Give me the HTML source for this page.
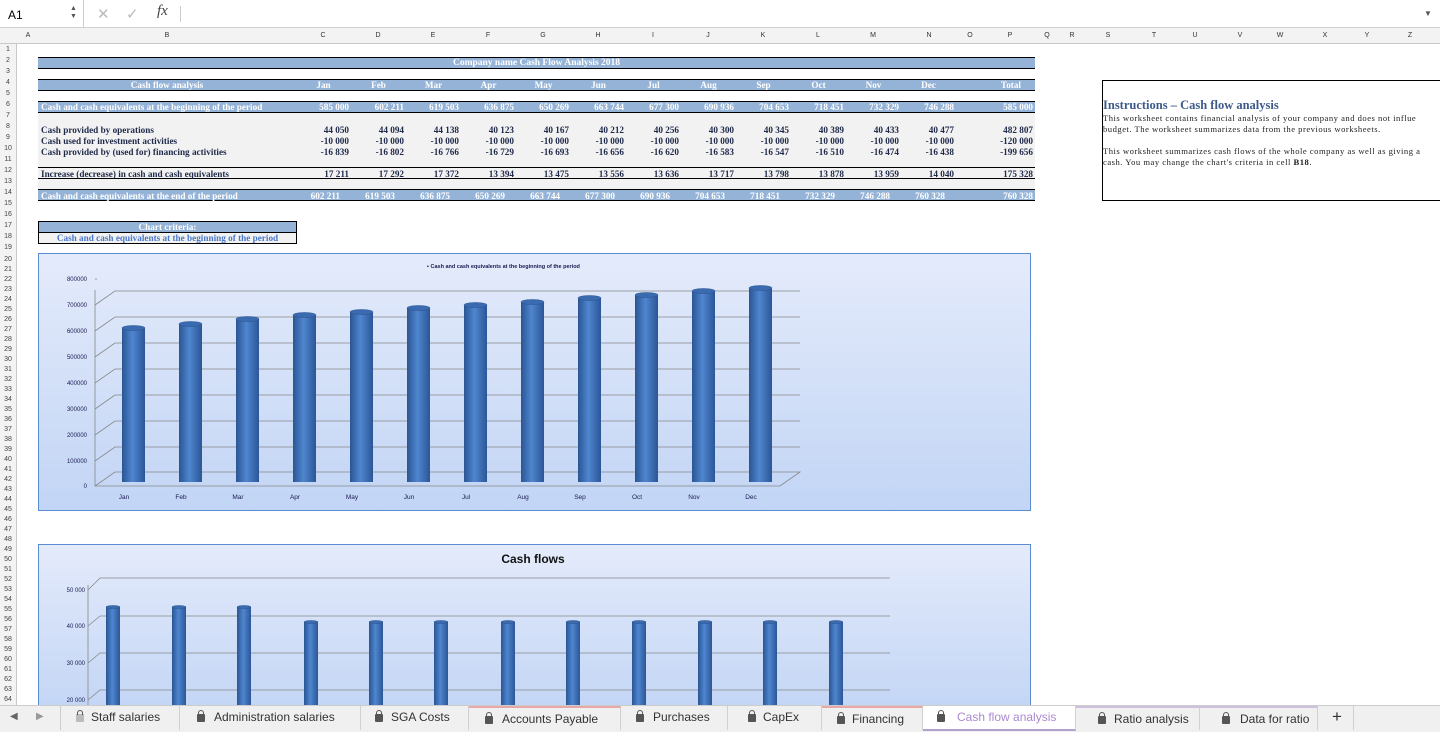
<!DOCTYPE html>
<html><head><meta charset="utf-8">
<style>
*{margin:0;padding:0;box-sizing:border-box}
body{width:1440px;height:732px;overflow:hidden;background:#fff;font-family:"Liberation Sans",sans-serif;position:relative}
.a{position:absolute}
.fb{top:0;left:0;width:1440px;height:28px;background:#fff;border-bottom:1px solid #d0d0d0}
.ch{top:28px;left:0;width:1440px;height:16px;background:#f3f3f3;border-bottom:1px solid #c8c8c8;font-size:7px;color:#333}
.ch span{position:absolute;top:4px;transform:translateX(-50%)}
.rh{left:0;top:44px;width:17px;background:#f3f3f3;border-right:1px solid #c8c8c8;height:661px;font-size:7px;color:#444}
.rh div{text-align:center;overflow:hidden}
.t{font-family:"Liberation Serif",serif;font-weight:bold;font-size:9.2px;color:#1f2a4a;white-space:nowrap;line-height:10px}
.bar{background:#95b3d7;border-top:1px solid #000;border-bottom:1px solid #000;left:38px;width:997px}
.w{color:#fff}
.r{text-align:right;width:52px}
.tabs{top:705px;left:0;width:1440px;height:27px;background:#f0f0f0;border-top:1px solid #ccc;font-size:12px;color:#333}
.tab{position:absolute;top:0;height:24px;line-height:22px;border-right:1px solid #d0d0d0;padding-left:18px}
.lk{position:absolute;left:2px;top:8px;width:8px;height:8px;background:#555;border-radius:1px}
.lk:before{content:"";position:absolute;left:1px;top:-4px;width:4px;height:4px;border:1px solid #555;border-bottom:none;border-radius:3px 3px 0 0}
</style></head><body>
<div class="a fb">
 <div class="a" style="left:0;top:0;width:84px;height:28px;border-right:1px solid #ccc;font-size:12px;padding:8px 0 0 8px">A1</div>
 <div class="a" style="left:70px;top:5px;font-size:7px;color:#555;line-height:8px">▲<br>▼</div>
 <div class="a" style="left:97px;top:5px;font-size:15px;color:#bbb">✕</div>
 <div class="a" style="left:126px;top:5px;font-size:15px;color:#bbb">✓</div>
 <div class="a" style="left:157px;top:3px;font-size:15px;font-style:italic;font-family:'Liberation Serif',serif;color:#444">fx</div>
 <div class="a" style="left:180px;top:6px;width:1px;height:16px;background:#ccc"></div>
 <div class="a" style="left:1424px;top:9px;font-size:8px;color:#555">▼</div>
</div>
<div class="a ch">
<span style="left:28px">A</span><span style="left:167px">B</span><span style="left:323px">C</span><span style="left:378px">D</span><span style="left:433px">E</span><span style="left:488px">F</span><span style="left:543px">G</span><span style="left:598px">H</span><span style="left:653px">I</span><span style="left:708px">J</span><span style="left:763px">K</span><span style="left:818px">L</span><span style="left:873px">M</span><span style="left:929px">N</span><span style="left:970px">O</span><span style="left:1010px">P</span><span style="left:1047px">Q</span><span style="left:1072px">R</span><span style="left:1108px">S</span><span style="left:1154px">T</span><span style="left:1195px">U</span><span style="left:1240px">V</span><span style="left:1280px">W</span><span style="left:1325px">X</span><span style="left:1367px">Y</span><span style="left:1410px">Z</span>
</div>
<div class="a rh">
<div style="height:2px"></div>
<div style="height:11px">1</div><div style="height:11px">2</div><div style="height:11px">3</div><div style="height:11px">4</div><div style="height:11px">5</div><div style="height:11px">6</div><div style="height:11px">7</div><div style="height:11px">8</div><div style="height:11px">9</div><div style="height:11px">10</div><div style="height:11px">11</div><div style="height:11px">12</div><div style="height:11px">13</div><div style="height:11px">14</div><div style="height:11px">15</div><div style="height:11px">16</div><div style="height:11px">17</div><div style="height:11px">18</div><div style="height:11px">19</div>
<div style="height:10px;line-height:10px">20</div><div style="height:10px;line-height:10px">21</div><div style="height:10px;line-height:10px">22</div><div style="height:10px;line-height:10px">23</div><div style="height:10px;line-height:10px">24</div><div style="height:10px;line-height:10px">25</div><div style="height:10px;line-height:10px">26</div><div style="height:10px;line-height:10px">27</div><div style="height:10px;line-height:10px">28</div><div style="height:10px;line-height:10px">29</div><div style="height:10px;line-height:10px">30</div><div style="height:10px;line-height:10px">31</div><div style="height:10px;line-height:10px">32</div><div style="height:10px;line-height:10px">33</div><div style="height:10px;line-height:10px">34</div><div style="height:10px;line-height:10px">35</div><div style="height:10px;line-height:10px">36</div><div style="height:10px;line-height:10px">37</div><div style="height:10px;line-height:10px">38</div><div style="height:10px;line-height:10px">39</div><div style="height:10px;line-height:10px">40</div><div style="height:10px;line-height:10px">41</div><div style="height:10px;line-height:10px">42</div><div style="height:10px;line-height:10px">43</div><div style="height:10px;line-height:10px">44</div><div style="height:10px;line-height:10px">45</div><div style="height:10px;line-height:10px">46</div><div style="height:10px;line-height:10px">47</div><div style="height:10px;line-height:10px">48</div><div style="height:10px;line-height:10px">49</div><div style="height:10px;line-height:10px">50</div><div style="height:10px;line-height:10px">51</div><div style="height:10px;line-height:10px">52</div><div style="height:10px;line-height:10px">53</div><div style="height:10px;line-height:10px">54</div><div style="height:10px;line-height:10px">55</div><div style="height:10px;line-height:10px">56</div><div style="height:10px;line-height:10px">57</div><div style="height:10px;line-height:10px">58</div><div style="height:10px;line-height:10px">59</div><div style="height:10px;line-height:10px">60</div><div style="height:10px;line-height:10px">61</div><div style="height:10px;line-height:10px">62</div><div style="height:10px;line-height:10px">63</div><div style="height:10px;line-height:10px">64</div>
</div>

<!-- table -->
<div class="a bar" style="top:57px;height:12px"></div>
<div class="a t w" style="top:58px;left:38px;width:997px;text-align:center;font-size:9.5px">Company name Cash Flow Analysis 2018</div>
<div class="a bar" style="top:79px;height:12px"></div>
<div class="a bar" style="top:101px;height:12px"></div>
<div class="a" style="top:113px;left:38px;width:997px;height:77px;background:#f2f2f2"></div>
<div class="a" style="top:167px;left:38px;width:997px;height:12px;border-top:1px solid #000;border-bottom:1px solid #000"></div>
<div class="a bar" style="top:189px;height:12px"></div>

<div class="a t w" style="top:80px;left:38px;width:258px;text-align:center">Cash flow analysis</div>
<div class="a t w" style="top:102px;left:41px">Cash and cash equivalents at the beginning of the period</div>
<div class="a t" style="top:125px;left:41px">Cash provided by operations</div>
<div class="a t" style="top:136px;left:41px">Cash used for investment activities</div>
<div class="a t" style="top:147px;left:41px">Cash provided by (used for) financing activities</div>
<div class="a t" style="top:169px;left:41px">Increase (decrease) in cash and cash equivalents</div>
<div class="a t w" style="top:191px;left:41px">Cash and cash equivalents at the end of the period</div>

<div class="a t w" style="top:80px;left:296px;width:739px;display:flex"><span style="width:55px;text-align:center">Jan</span><span style="width:55px;text-align:center">Feb</span><span style="width:55px;text-align:center">Mar</span><span style="width:55px;text-align:center">Apr</span><span style="width:55px;text-align:center">May</span><span style="width:55px;text-align:center">Jun</span><span style="width:55px;text-align:center">Jul</span><span style="width:55px;text-align:center">Aug</span><span style="width:55px;text-align:center">Sep</span><span style="width:55px;text-align:center">Oct</span><span style="width:55px;text-align:center">Nov</span><span style="width:55px;text-align:center">Dec</span><span style="width:79px;text-align:right;padding-right:14px">Total</span></div>

<div class="a t w" style="top:102px;left:296px;display:flex"><span class="r" style="width:53px">585 000</span><span class="r" style="width:55px">602 211</span><span class="r" style="width:55px">619 503</span><span class="r" style="width:55px">636 875</span><span class="r" style="width:55px">650 269</span><span class="r" style="width:55px">663 744</span><span class="r" style="width:55px">677 300</span><span class="r" style="width:55px">690 936</span><span class="r" style="width:55px">704 653</span><span class="r" style="width:55px">718 451</span><span class="r" style="width:55px">732 329</span><span class="r" style="width:55px">746 288</span><span class="r" style="width:79px">585 000</span></div>
<div class="a t" style="top:125px;left:296px;display:flex"><span class="r" style="width:53px">44 050</span><span class="r" style="width:55px">44 094</span><span class="r" style="width:55px">44 138</span><span class="r" style="width:55px">40 123</span><span class="r" style="width:55px">40 167</span><span class="r" style="width:55px">40 212</span><span class="r" style="width:55px">40 256</span><span class="r" style="width:55px">40 300</span><span class="r" style="width:55px">40 345</span><span class="r" style="width:55px">40 389</span><span class="r" style="width:55px">40 433</span><span class="r" style="width:55px">40 477</span><span class="r" style="width:79px">482 807</span></div>
<div class="a t" style="top:136px;left:296px;display:flex"><span class="r" style="width:53px">-10 000</span><span class="r" style="width:55px">-10 000</span><span class="r" style="width:55px">-10 000</span><span class="r" style="width:55px">-10 000</span><span class="r" style="width:55px">-10 000</span><span class="r" style="width:55px">-10 000</span><span class="r" style="width:55px">-10 000</span><span class="r" style="width:55px">-10 000</span><span class="r" style="width:55px">-10 000</span><span class="r" style="width:55px">-10 000</span><span class="r" style="width:55px">-10 000</span><span class="r" style="width:55px">-10 000</span><span class="r" style="width:79px">-120 000</span></div>
<div class="a t" style="top:147px;left:296px;display:flex"><span class="r" style="width:53px">-16 839</span><span class="r" style="width:55px">-16 802</span><span class="r" style="width:55px">-16 766</span><span class="r" style="width:55px">-16 729</span><span class="r" style="width:55px">-16 693</span><span class="r" style="width:55px">-16 656</span><span class="r" style="width:55px">-16 620</span><span class="r" style="width:55px">-16 583</span><span class="r" style="width:55px">-16 547</span><span class="r" style="width:55px">-16 510</span><span class="r" style="width:55px">-16 474</span><span class="r" style="width:55px">-16 438</span><span class="r" style="width:79px">-199 656</span></div>
<div class="a t" style="top:169px;left:296px;display:flex"><span class="r" style="width:53px">17 211</span><span class="r" style="width:55px">17 292</span><span class="r" style="width:55px">17 372</span><span class="r" style="width:55px">13 394</span><span class="r" style="width:55px">13 475</span><span class="r" style="width:55px">13 556</span><span class="r" style="width:55px">13 636</span><span class="r" style="width:55px">13 717</span><span class="r" style="width:55px">13 798</span><span class="r" style="width:55px">13 878</span><span class="r" style="width:55px">13 959</span><span class="r" style="width:55px">14 040</span><span class="r" style="width:79px">175 328</span></div>
<div class="a t w" style="top:191px;left:296px;display:flex"><span class="r" style="width:44px">602 211</span><span class="r" style="width:55px">619 503</span><span class="r" style="width:55px">636 875</span><span class="r" style="width:55px">650 269</span><span class="r" style="width:55px">663 744</span><span class="r" style="width:55px">677 300</span><span class="r" style="width:55px">690 936</span><span class="r" style="width:55px">704 653</span><span class="r" style="width:55px">718 451</span><span class="r" style="width:55px">732 329</span><span class="r" style="width:55px">746 288</span><span class="r" style="width:55px">760 328</span><span class="r" style="width:88px">760 328</span></div>

<!-- chart criteria -->
<div class="a" style="top:221px;left:38px;width:259px;height:23px;border:1px solid #000;background:#f2f2f2"></div>
<div class="a" style="top:221px;left:38px;width:259px;height:12px;border:1px solid #000;background:#95b3d7"></div>
<div class="a t w" style="top:222px;left:38px;width:259px;text-align:center">Chart criteria:</div>
<div class="a t" style="top:233px;left:38px;width:259px;text-align:center;color:#4a78c8">Cash and cash equivalents at the beginning of the period</div>

<!-- instructions -->
<div class="a" style="top:80px;left:1102px;width:345px;height:121px;border:1px solid #000"></div>
<div class="a t" style="top:98px;left:1103px;font-size:12.5px;line-height:14px;color:#3d5a8a">Instructions – Cash flow analysis</div>
<div class="a" style="top:113px;left:1103px;font-family:'Liberation Serif',serif;font-size:8.6px;letter-spacing:0.5px;color:#222;line-height:11px;white-space:nowrap">This worksheet contains financial analysis of your company and does not influe<br>budget. The worksheet summarizes data from the previous worksheets.<br><br>This worksheet summarizes cash flows of the whole company as well as giving a<br>cash. You may change the chart's criteria in cell <b>B18</b>.</div>

<!-- charts -->
<svg class="a" style="left:0;top:0" width="1440" height="705" xmlns="http://www.w3.org/2000/svg">
<defs>
<linearGradient id="bg" x1="0" y1="0" x2="0" y2="1"><stop offset="0" stop-color="#e4ebfb"/><stop offset="1" stop-color="#c2d5f5"/></linearGradient>
<linearGradient id="cy" x1="0" y1="0" x2="1" y2="0"><stop offset="0" stop-color="#2a5594"/><stop offset=".45" stop-color="#4f86cf"/><stop offset="1" stop-color="#2b5697"/></linearGradient>
</defs>
<rect x="38.5" y="253.5" width="992" height="257" fill="url(#bg)" stroke="#5b8bd0"/>
<rect x="38.5" y="544.5" width="992" height="170" fill="url(#bg)" stroke="#5b8bd0"/>
<g font-family="Liberation Sans,sans-serif" font-size="6" fill="#1a1a50">
<text x="87" y="281" text-anchor="end">800000</text><text x="87" y="307" text-anchor="end">700000</text><text x="87" y="333" text-anchor="end">600000</text><text x="87" y="359" text-anchor="end">500000</text><text x="87" y="385" text-anchor="end">400000</text><text x="87" y="411" text-anchor="end">300000</text><text x="87" y="437" text-anchor="end">200000</text><text x="87" y="463" text-anchor="end">100000</text><text x="87" y="488" text-anchor="end">0</text>
<text x="427" y="268" font-size="5.5" font-weight="bold">▪ Cash and cash equivalents at the beginning of the period</text>
<g font-size="6.5" text-anchor="middle"><text x="124" y="499">Jan</text><text x="181" y="499">Feb</text><text x="238" y="499">Mar</text><text x="295" y="499">Apr</text><text x="352" y="499">May</text><text x="409" y="499">Jun</text><text x="466" y="499">Jul</text><text x="523" y="499">Aug</text><text x="580" y="499">Sep</text><text x="637" y="499">Oct</text><text x="694" y="499">Nov</text><text x="751" y="499">Dec</text></g>
<text x="85" y="592" text-anchor="end">50 000</text><text x="85" y="628" text-anchor="end">40 000</text><text x="85" y="665" text-anchor="end">30 000</text><text x="85" y="702" text-anchor="end">20 000</text>
<text x="533" y="563" font-size="12" font-weight="bold" fill="#111" text-anchor="middle">Cash flows</text>
</g>
<g stroke="#888" stroke-width="0.8" fill="none">
<path d="M95 279h2M95 305L115 291H800M95 331L115 317H800M95 357L115 343H800M95 383L115 369H800M95 409L115 395H800M95 435L115 421H800M95 461L115 447H800M95 486L115 472H800L780 486H95M95 290V486"/>
<path d="M88 590L100 578H890M88 626L100 616H890M88 663L100 653H890M88 700L100 690H890M88 585V705"/>
</g>
<g fill="url(#cy)">
<rect x="122" y="328" width="23" height="154"/><rect x="179" y="324" width="23" height="158"/><rect x="236" y="319" width="23" height="163"/><rect x="293" y="315" width="23" height="167"/><rect x="350" y="312" width="23" height="170"/><rect x="407" y="308" width="23" height="174"/><rect x="464" y="305" width="23" height="177"/><rect x="521" y="302" width="23" height="180"/><rect x="578" y="298" width="23" height="184"/><rect x="635" y="295" width="23" height="187"/><rect x="692" y="291" width="23" height="191"/><rect x="749" y="288" width="23" height="194"/>
<rect x="106" y="607" width="14" height="98"/><rect x="172" y="607" width="14" height="98"/><rect x="237" y="607" width="14" height="98"/><rect x="304" y="622" width="14" height="83"/><rect x="369" y="622" width="14" height="83"/><rect x="434" y="622" width="14" height="83"/><rect x="501" y="622" width="14" height="83"/><rect x="566" y="622" width="14" height="83"/><rect x="632" y="622" width="14" height="83"/><rect x="698" y="622" width="14" height="83"/><rect x="763" y="622" width="14" height="83"/><rect x="829" y="622" width="14" height="83"/>
</g>
<g fill="#3a6bb0" stroke="#2a528c" stroke-width=".5">
<ellipse cx="133.5" cy="328" rx="11.5" ry="2.5"/><ellipse cx="190.5" cy="324" rx="11.5" ry="2.5"/><ellipse cx="247.5" cy="319" rx="11.5" ry="2.5"/><ellipse cx="304.5" cy="315" rx="11.5" ry="2.5"/><ellipse cx="361.5" cy="312" rx="11.5" ry="2.5"/><ellipse cx="418.5" cy="308" rx="11.5" ry="2.5"/><ellipse cx="475.5" cy="305" rx="11.5" ry="2.5"/><ellipse cx="532.5" cy="302" rx="11.5" ry="2.5"/><ellipse cx="589.5" cy="298" rx="11.5" ry="2.5"/><ellipse cx="646.5" cy="295" rx="11.5" ry="2.5"/><ellipse cx="703.5" cy="291" rx="11.5" ry="2.5"/><ellipse cx="760.5" cy="288" rx="11.5" ry="2.5"/>
<ellipse cx="113" cy="607" rx="7" ry="1.5"/><ellipse cx="179" cy="607" rx="7" ry="1.5"/><ellipse cx="244" cy="607" rx="7" ry="1.5"/><ellipse cx="311" cy="622" rx="7" ry="1.5"/><ellipse cx="376" cy="622" rx="7" ry="1.5"/><ellipse cx="441" cy="622" rx="7" ry="1.5"/><ellipse cx="508" cy="622" rx="7" ry="1.5"/><ellipse cx="573" cy="622" rx="7" ry="1.5"/><ellipse cx="639" cy="622" rx="7" ry="1.5"/><ellipse cx="705" cy="622" rx="7" ry="1.5"/><ellipse cx="770" cy="622" rx="7" ry="1.5"/><ellipse cx="836" cy="622" rx="7" ry="1.5"/>
</g>
</svg>

<!-- tabs -->
<div class="a tabs">
 <div class="a" style="left:10px;top:5px;font-size:10px;color:#666">◀</div>
 <div class="a" style="left:36px;top:5px;font-size:10px;color:#999">▶</div>
 <div class="tab" style="left:60px;width:120px;padding-left:30px;border-left:1px solid #ccc"><span class="lk" style="left:15px;background:#bbb"></span>Staff salaries</div>
 <div class="tab" style="left:180px;width:181px;padding-left:34px"><span class="lk" style="left:17px"></span>Administration salaries</div>
 <div class="tab" style="left:361px;width:108px;padding-left:30px"><span class="lk" style="left:14px"></span>SGA Costs</div>
 <div class="tab" style="left:469px;width:152px;padding-left:33px;border-top:2px solid #e8a8a8"><span class="lk" style="left:16px"></span>Accounts Payable</div>
 <div class="tab" style="left:621px;width:107px;padding-left:32px"><span class="lk" style="left:15px"></span>Purchases</div>
 <div class="tab" style="left:728px;width:94px;padding-left:35px"><span class="lk" style="left:20px"></span>CapEx</div>
 <div class="tab" style="left:822px;width:101px;padding-left:30px;border-top:2px solid #e8a8a8"><span class="lk" style="left:15px"></span>Financing</div>
 <div class="tab" style="left:923px;width:153px;padding-left:34px;background:#fff;color:#a98ad0;border-bottom:2px solid #b4a0cc;height:25px"><span class="lk" style="left:14px"></span>Cash flow analysis</div>
 <div class="tab" style="left:1076px;width:124px;padding-left:38px;border-top:2px solid #cfc0e0"><span class="lk" style="left:22px"></span>Ratio analysis</div>
 <div class="tab" style="left:1200px;width:118px;padding-left:40px;border-top:2px solid #cfc0e0"><span class="lk" style="left:22px"></span>Data for ratio</div>
 <div class="tab" style="left:1318px;width:36px;padding-left:14px;font-size:17px">+</div>
</div>
</body></html>
